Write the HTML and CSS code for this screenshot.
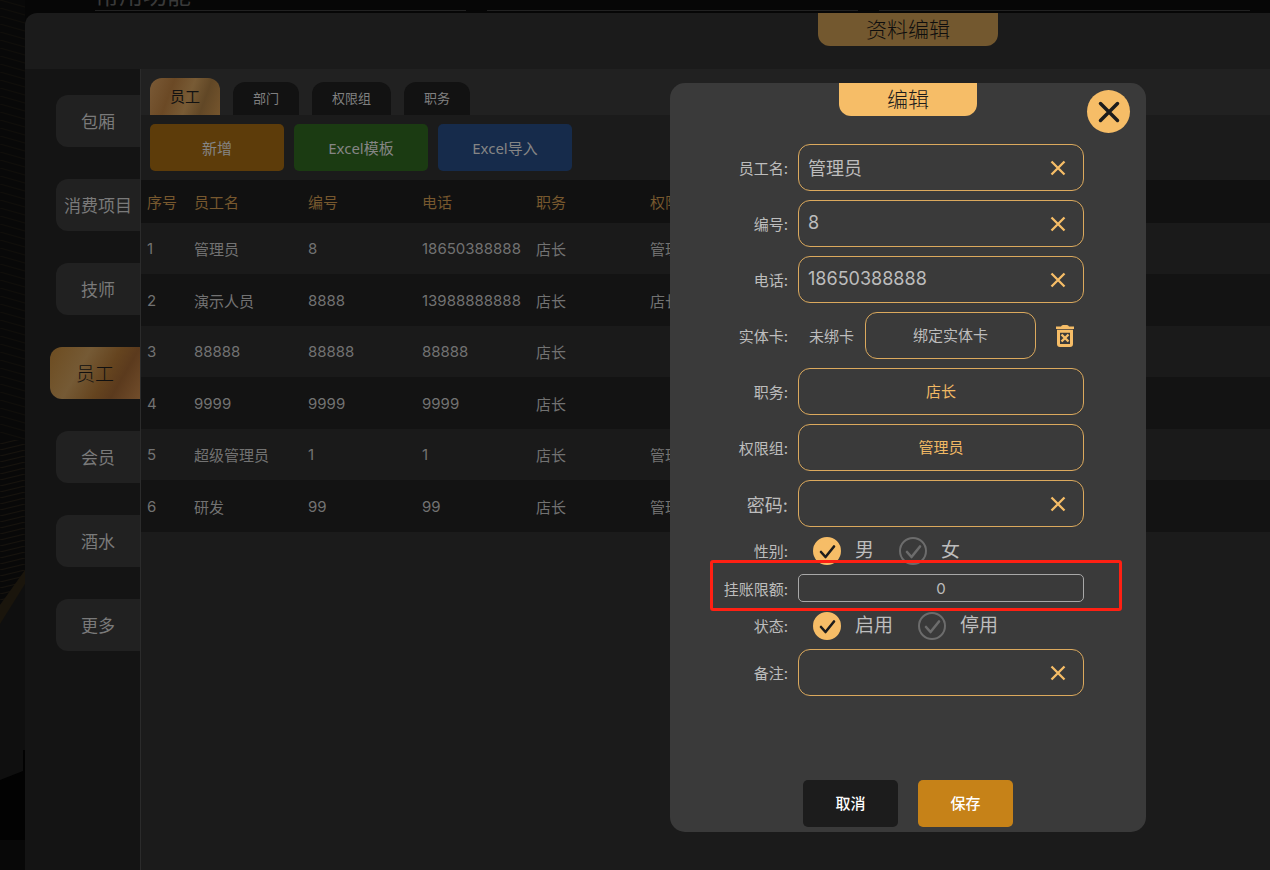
FILE: index.html
```html
<!DOCTYPE html>
<html lang="zh-CN">
<head>
<meta charset="UTF-8">
<meta name="viewport" content="width=device-width, initial-scale=1.0">
<title>资料编辑</title>
<link rel="stylesheet" href="styles.css">
</head>
<body>
<svg class="backdrop" viewBox="0 0 25 870" aria-hidden="true">
    <defs>
        <pattern id="rays" width="25" height="8" patternUnits="userSpaceOnUse">
            <path d="M0 0L25 7" stroke="#100e0a" stroke-width="1"/>
        </pattern>
        <pattern id="rays-up" width="25" height="6" patternUnits="userSpaceOnUse">
            <path d="M0 6L25 0" stroke="#17130d" stroke-width="1"/>
        </pattern>
    </defs>
    <rect width="25" height="870" fill="#080808"/>
    <rect width="25" height="440" fill="url(#rays)"/>
    <rect y="440" width="25" height="180" fill="url(#rays-up)"/>
    <path d="M0 605L25 572V782H0Z" fill="#0f0f0f"/>
    <path d="M0 605L25 570V584L0 624Z" fill="#1a150c"/>
    <path d="M0 780L23 771V750H25V840H0Z" fill="#020202"/>
</svg>
<div class="screen">
    <div class="home">
        <h2 class="home-title">常用功能</h2>
        <div class="home-cards">
            <div class="home-card"></div>
            <div class="home-card"></div>
            <div class="home-card"></div>
        </div>
    </div>

    <div class="panel">
        <header class="panel-header">
            <h1 class="title-tab dim">资料编辑</h1>
        </header>
        <div class="panel-body">
            <nav class="sidebar">
                <button class="side-item">包厢</button>
                <button class="side-item">消费项目</button>
                <button class="side-item">技师</button>
                <button class="side-item active">员工</button>
                <button class="side-item">会员</button>
                <button class="side-item">酒水</button>
                <button class="side-item">更多</button>
            </nav>
            <main class="main">
                <div class="tabs">
                    <button class="tab active">员工</button>
                    <button class="tab">部门</button>
                    <button class="tab">权限组</button>
                    <button class="tab">职务</button>
                </div>
                <div class="toolbar">
                    <button class="tool orange">新增</button>
                    <button class="tool green">Excel模板</button>
                    <button class="tool blue">Excel导入</button>
                </div>
                <table class="staff-table">
                    <thead>
                        <tr>
                            <th class="col-index">序号</th>
                            <th class="col">员工名</th>
                            <th class="col">编号</th>
                            <th class="col">电话</th>
                            <th class="col">职务</th>
                            <th>权限组</th>
                        </tr>
                    </thead>
                    <tbody>
                        <tr><td>1</td><td>管理员</td><td>8</td><td>18650388888</td><td>店长</td><td>管理员</td></tr>
                        <tr><td>2</td><td>演示人员</td><td>8888</td><td>13988888888</td><td>店长</td><td>店长</td></tr>
                        <tr><td>3</td><td>88888</td><td>88888</td><td>88888</td><td>店长</td><td></td></tr>
                        <tr><td>4</td><td>9999</td><td>9999</td><td>9999</td><td>店长</td><td></td></tr>
                        <tr><td>5</td><td>超级管理员</td><td>1</td><td>1</td><td>店长</td><td>管理员</td></tr>
                        <tr><td>6</td><td>研发</td><td>99</td><td>99</td><td>店长</td><td>管理员</td></tr>
                    </tbody>
                </table>
            </main>
        </div>
    </div>
</div>

<!-- Edit dialog -->
<div class="overlay">
    <form class="modal" role="dialog" aria-labelledby="modal-title">
        <h2 class="title-tab" id="modal-title">编辑</h2>
        <button type="button" class="close" aria-label="关闭">
            <svg width="22" height="22" viewBox="0 0 22 22"><path d="M2.500 2.500L19.500 19.500M19.500 2.500L2.500 19.500"/></svg>
        </button>

        <div class="fields">
            <div class="row">
                <label for="name">员工名:</label>
                <div class="box">
                    <input type="text" id="name" value="管理员">
                    <button type="button" class="clear" aria-label="清除"><svg width="16" height="16" viewBox="0 0 16 16"><path d="M1.500 1.500L14.500 14.500M14.500 1.500L1.500 14.500"/></svg></button>
                </div>
            </div>
            <div class="row">
                <label for="number">编号:</label>
                <div class="box">
                    <input type="text" id="number" value="8">
                    <button type="button" class="clear" aria-label="清除"><svg width="16" height="16" viewBox="0 0 16 16"><path d="M1.500 1.500L14.500 14.500M14.500 1.500L1.500 14.500"/></svg></button>
                </div>
            </div>
            <div class="row">
                <label for="phone">电话:</label>
                <div class="box">
                    <input type="text" id="phone" value="18650388888">
                    <button type="button" class="clear" aria-label="清除"><svg width="16" height="16" viewBox="0 0 16 16"><path d="M1.500 1.500L14.500 14.500M14.500 1.500L1.500 14.500"/></svg></button>
                </div>
            </div>
            <div class="row">
                <label for="bind-card">实体卡:</label>
                <div class="card-field">
                    <span class="card-state">未绑卡</span>
                    <button type="button" class="pick bind" id="bind-card">绑定实体卡</button>
                    <button type="button" class="trash" aria-label="删除实体卡">
                        <svg width="18" height="22" viewBox="0 0 18 22">
                            <path d="M5 1.5Q5.500 0 7 0H11Q12.500 0 13 1.500H18V4H0V1.500Z" fill="#f6bd67"/>
                            <path d="M2.500 6.200H15.500V19Q15.500 20.500 14 20.500H4Q2.500 20.500 2.500 19Z" fill="none" stroke="#f6bd67" stroke-width="3"/>
                            <path d="M5.500 9.500L12.500 16.500M12.500 9.500L5.500 16.500" fill="none" stroke="#f6bd67" stroke-width="2.400"/>
                        </svg>
                    </button>
                </div>
            </div>
            <div class="row">
                <label for="job">职务:</label>
                <button type="button" class="pick gold" id="job">店长</button>
            </div>
            <div class="row">
                <label for="group">权限组:</label>
                <button type="button" class="pick gold" id="group">管理员</button>
            </div>
            <div class="row">
                <label for="password" class="large">密码:</label>
                <div class="box">
                    <input type="password" id="password">
                    <button type="button" class="clear" aria-label="清除"><svg width="16" height="16" viewBox="0 0 16 16"><path d="M1.500 1.500L14.500 14.500M14.500 1.500L1.500 14.500"/></svg></button>
                </div>
            </div>
            <div class="row short" role="radiogroup" aria-labelledby="gender-label">
                <span class="label" id="gender-label">性别:</span>
                <div class="radios">
                    <label class="radio">
                        <span class="check"><input type="radio" name="gender" checked><svg viewBox="0 0 28 28"><path d="M8 15L12.500 20L21 9.500"/></svg></span>
                        男
                    </label>
                    <label class="radio">
                        <span class="check"><input type="radio" name="gender"><svg viewBox="0 0 28 28"><path d="M8 15L12.500 20L21 9.500"/></svg></span>
                        女
                    </label>
                </div>
            </div>
            <div class="row marked">
                <label for="limit">挂账限额:</label>
                <input type="text" class="limit" id="limit" value="0">
            </div>
            <div class="row short" role="radiogroup" aria-labelledby="state-label">
                <span class="label" id="state-label">状态:</span>
                <div class="radios">
                    <label class="radio">
                        <span class="check"><input type="radio" name="state" checked><svg viewBox="0 0 28 28"><path d="M8 15L12.500 20L21 9.500"/></svg></span>
                        启用
                    </label>
                    <label class="radio">
                        <span class="check"><input type="radio" name="state"><svg viewBox="0 0 28 28"><path d="M8 15L12.500 20L21 9.500"/></svg></span>
                        停用
                    </label>
                </div>
            </div>
            <div class="row">
                <label for="remark">备注:</label>
                <div class="box">
                    <input type="text" id="remark">
                    <button type="button" class="clear" aria-label="清除"><svg width="16" height="16" viewBox="0 0 16 16"><path d="M1.500 1.500L14.500 14.500M14.500 1.500L1.500 14.500"/></svg></button>
                </div>
            </div>
        </div>

        <div class="actions">
            <button type="button" class="action">取消</button>
            <button type="submit" class="action save">保存</button>
        </div>
    </form>
</div>
</body>
</html>
```
FILE: styles.css
```css
* {
    box-sizing: border-box;
}
html {
    overflow: hidden;
}
body {
    margin: 0;
    background-color: #060606;
    color: #727272;
    font-family: Inter, "Noto Sans CJK SC", sans-serif;
    font-size: 15px;
}
button, input {
    margin: 0;
    padding: 0 0 2px;
    border: none;
    background: none;
    color: inherit;
    font: inherit;
}
button {
    cursor: pointer;
}
h1, h2 {
    margin: 0;
}
.backdrop {
    position: absolute;
    left: 0;
    top: 0;
    width: 25px;
    height: 870px;
}
/* the client is wider than the window, its right part runs off screen */
.screen {
    position: relative;
    display: flex;
    flex-direction: column;
    width: 143%;
    height: 100vh;
}
.home {
    display: flex;
    flex-direction: column;
    justify-content: flex-end;
    height: 13px;
    padding-left: 95px;
    overflow: hidden;
}
.home-title {
    color: #393939;
    font-size: 24px;
    font-weight: 400;
    line-height: 24px;
}
.home-cards {
    display: flex;
    gap: 21px;
    padding-top: 2px;
}
.home-card {
    flex: 0 0 371px;
    height: 3px;
    border-top: 1px solid #222222;
}

.panel {
    flex: 1;
    display: flex;
    flex-direction: column;
    margin: 0 25px;
    border-radius: 12px 12px 0 0;
    background-color: #1b1b1b;
    overflow: hidden;
}
.panel-header {
    height: 56px;
}
.title-tab {
    width: fit-content;
    margin: 0 auto;
    padding: 0 48px;
    border-radius: 0 0 12px 12px;
    background-color: #f6bd67;
    color: #1c1c1c;
    font-size: 21px;
    font-weight: 300;
    line-height: 33px;
}
.title-tab.dim {
    background-color: #73582f;
    color: #0e0e0e;
}
.panel-body {
    flex: 1;
    display: flex;
}

.sidebar {
    flex: 0 0 116px;
    display: flex;
    flex-direction: column;
    align-items: flex-end;
    gap: 32px;
    padding-top: 26px;
    border-right: 1px solid #2b2b2b;
    background-color: #141414;
}
.side-item {
    width: 84px;
    height: 52px;
    border-radius: 12px 0 0 12px;
    background-color: #212121;
    color: #7a7a7a;
    font-size: 17px;
}
.side-item.active {
    width: 90px;
    background: linear-gradient(120deg, #6d4c20 0%, #755a35 35%, #65441f 60%, #5b3a1d 75%, #714d2b 100%);
    color: #101010;
    font-size: 19px;
    font-weight: 300;
}

.main {
    flex: 1;
}
.tabs {
    display: flex;
    align-items: flex-end;
    gap: 13px;
    height: 46px;
    padding-left: 9px;
    background-color: #212121;
}
.tab {
    height: 33px;
    padding: 0 20px 2px;
    border-radius: 12px 12px 0 0;
    background-color: #121212;
    color: #808080;
    font-size: 13px;
}
.tab.active {
    height: 37px;
    background: linear-gradient(110deg, #7a5a36 0%, #6b4925 30%, #785b35 55%, #614726 75%, #75552d 100%);
    color: #121212;
    font-size: 15px;
}
.toolbar {
    display: flex;
    gap: 10px;
    padding: 9px;
}
.tool {
    width: 134px;
    height: 47px;
    padding: 0;
    border-radius: 5px;
    color: #858585;
    font-family: "Noto Sans", "Noto Sans CJK SC", sans-serif;
}
.tool.orange {
    background-color: #5d3c0a;
}
.tool.green {
    background-color: #1b3b12;
}
.tool.blue {
    background-color: #162b4b;
}

.staff-table {
    width: 100%;
    border-collapse: collapse;
    table-layout: fixed;
    text-align: left;
}
.staff-table th, .staff-table td {
    padding: 0 0 0 6px;
    font-weight: 400;
}
.staff-table th {
    height: 43px;
    background-color: #111111;
    color: #77582e;
}
.staff-table td {
    height: 51px;
    background-color: #1a1a1a;
}
.staff-table tr:nth-child(even) td {
    height: 52px;
    background-color: #131313;
}
.col-index {
    width: 47px;
}
.col {
    width: 114px;
}

.overlay {
    position: absolute;
    left: 0;
    top: 0;
    display: flex;
    justify-content: center;
    width: 143%;
    padding-top: 83px;
}
.modal {
    position: relative;
    width: 476px;
    padding-bottom: 5px;
    border-radius: 15px;
    background-color: #3a3a3a;
    color: #bdbdbd;
}
.close {
    position: absolute;
    top: 7px;
    right: 16px;
    display: grid;
    place-items: center;
    width: 43px;
    height: 43px;
    padding: 0;
    border-radius: 50%;
    background-color: #f6bd67;
}
.close path {
    stroke: #1c1c1c;
    stroke-width: 3.5;
    stroke-linecap: round;
}
.fields {
    display: flex;
    flex-direction: column;
    gap: 9px;
    padding-top: 28px;
}
.row {
    display: grid;
    grid-template-columns: 118px minmax(0, 1fr);
    align-items: center;
    gap: 10px;
    padding-right: 62px;
}
.row > label, .label {
    text-align: right;
}
.row > .large {
    font-size: 18px;
}
.box {
    display: flex;
    height: 47px;
    border: 1px solid #dba95d;
    border-radius: 12px;
}
.box input {
    flex: 1;
    min-width: 0;
    padding-left: 9px;
    outline: none;
    font-size: 18px;
}
.clear {
    display: grid;
    place-items: center;
    width: 50px;
    padding: 0;
}
.clear path {
    stroke: #f6bd67;
    stroke-width: 2.3;
}
.pick {
    height: 47px;
    border: 1px solid #dba95d;
    border-radius: 12px;
}
.pick.gold {
    color: #f0b864;
}
.card-field {
    display: flex;
    align-items: center;
}
.card-state {
    padding: 0 11px;
}
.bind {
    flex: 1;
}
.trash {
    display: grid;
    place-items: center;
    width: 18px;
    padding: 0;
    margin: 0 10px 0 20px;
}
.short {
    height: 29px;
}
.radios {
    display: flex;
    gap: 25px;
    padding-left: 15px;
}
.radio {
    display: flex;
    align-items: center;
    gap: 14px;
    font-size: 19px;
    line-height: 28px;
}
.check {
    display: grid;
    width: 28px;
    height: 28px;
}
.check input, .check svg {
    grid-area: 1 / 1;
    width: 28px;
    height: 28px;
}
.check input {
    appearance: none;
    padding: 0;
    border: 2px solid #6c6c6c;
    border-radius: 50%;
}
.check input:checked {
    border-color: #f6bd67;
    background-color: #f6bd67;
}
.check svg {
    fill: none;
    stroke: #6c6c6c;
    stroke-width: 2.6;
    stroke-linecap: round;
    stroke-linejoin: round;
    pointer-events: none;
}
.check input:checked + svg {
    stroke: #1c1c1c;
}
.limit {
    width: 100%;
    height: 28px;
    padding: 0;
    border: 1px solid #a8a8a8;
    border-radius: 5px;
    text-align: center;
}
.marked {
    position: relative;
}
.marked::after {
    content: "";
    position: absolute;
    top: -14px;
    right: 24px;
    bottom: -9px;
    left: 40px;
    border: 3px solid #ff2013;
    border-radius: 3px;
    pointer-events: none;
}
.actions {
    display: flex;
    justify-content: center;
    gap: 20px;
    padding-top: 84px;
}
.action {
    width: 95px;
    height: 47px;
    border-radius: 5px;
    background-color: #1c1c1c;
    color: #ffffff;
    font-weight: 500;
}
.action.save {
    background-color: #c68218;
}
```
